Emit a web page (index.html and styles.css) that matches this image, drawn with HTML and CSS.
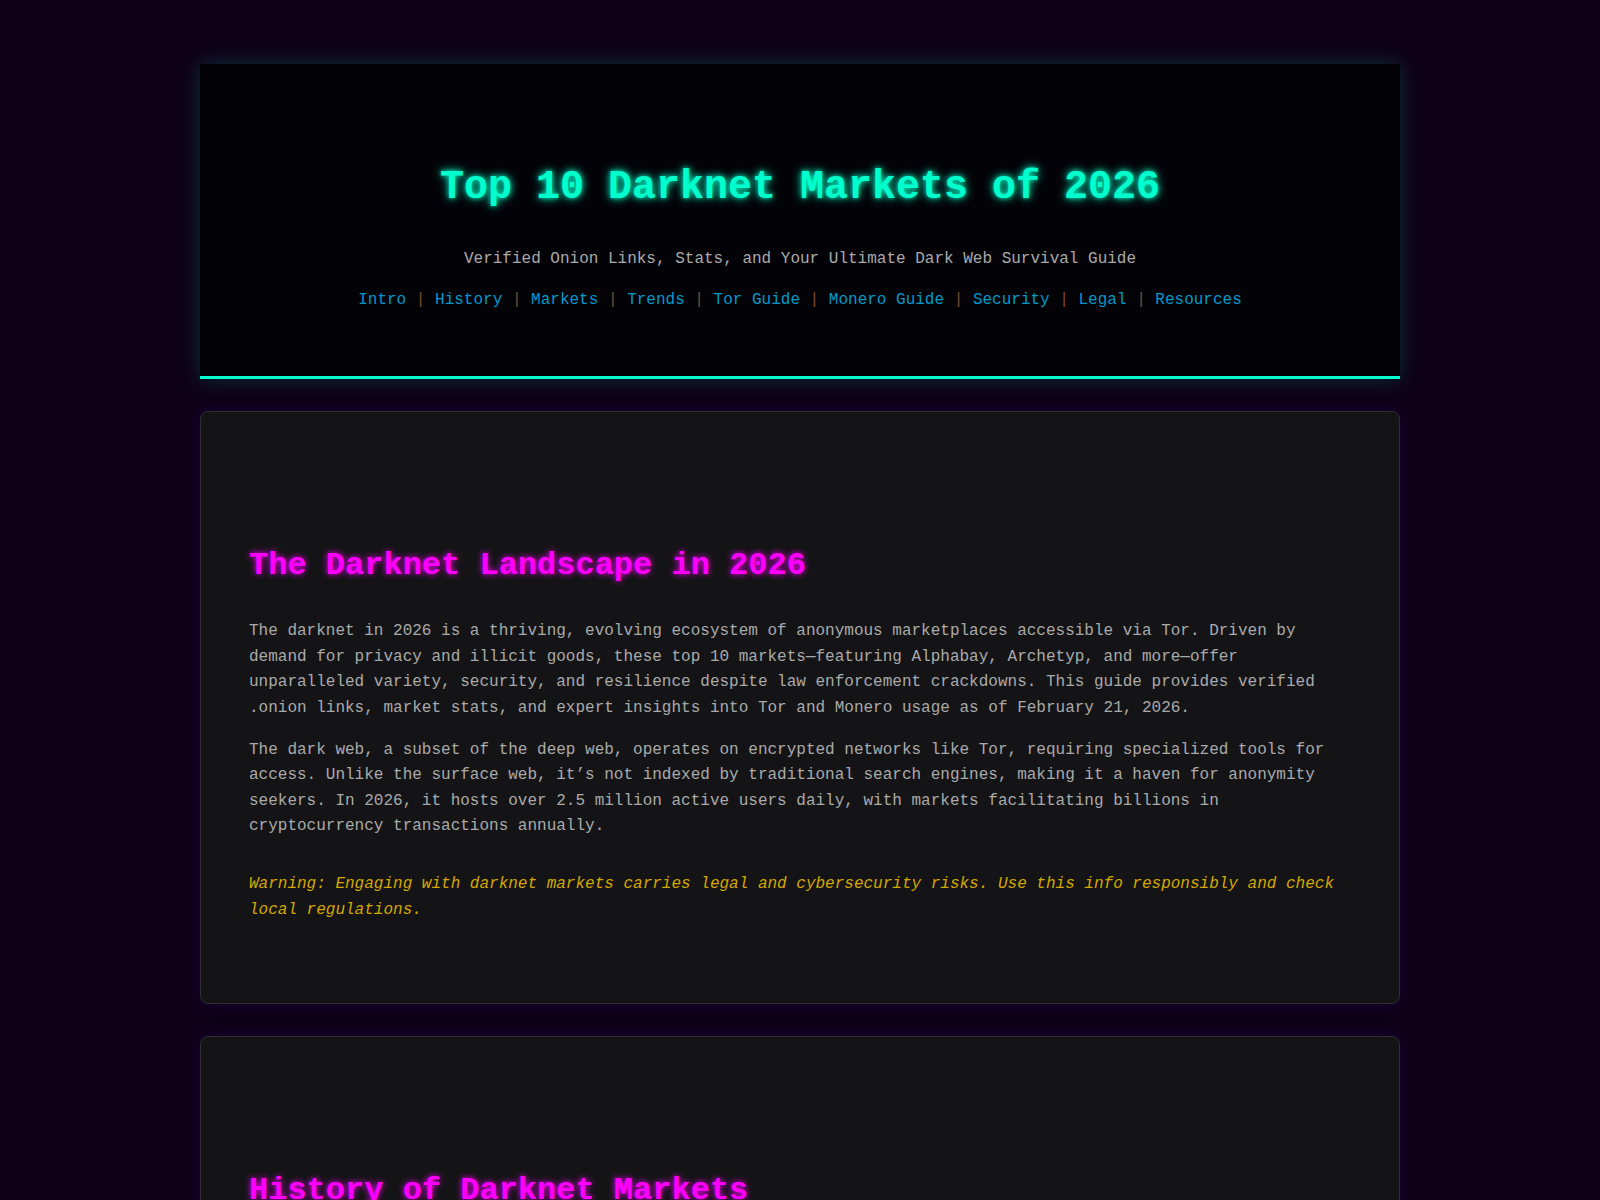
FILE: index.html
```html
<!DOCTYPE html>
<html lang="en">
<head>
    <meta charset="UTF-8">
    <meta name="viewport" content="width=device-width, initial-scale=1.0">
    <title>Top 10 Darknet Markets of 2026</title>
    <link rel="stylesheet" href="styles.css">
</head>
<body>
    <div class="container">
        <header class="site-header">
            <h1>Top 10 Darknet Markets of 2026</h1>
            <p class="tagline">Verified Onion Links, Stats, and Your Ultimate Dark Web Survival Guide</p>
            <nav class="nav">
                <a href="#intro">Intro</a> <span class="sep">|</span>
                <a href="#history">History</a> <span class="sep">|</span>
                <a href="#markets">Markets</a> <span class="sep">|</span>
                <a href="#trends">Trends</a> <span class="sep">|</span>
                <a href="#tor">Tor Guide</a> <span class="sep">|</span>
                <a href="#monero">Monero Guide</a> <span class="sep">|</span>
                <a href="#security">Security</a> <span class="sep">|</span>
                <a href="#legal">Legal</a> <span class="sep">|</span>
                <a href="#resources">Resources</a>
            </nav>
        </header>

        <section class="section" id="intro">
            <h2>The Darknet Landscape in 2026</h2>
            <p>The darknet in 2026 is a thriving, evolving ecosystem of anonymous marketplaces accessible via Tor. Driven by demand for privacy and illicit goods, these top 10 markets—featuring Alphabay, Archetyp, and more—offer unparalleled variety, security, and resilience despite law enforcement crackdowns. This guide provides verified .onion links, market stats, and expert insights into Tor and Monero usage as of February 21, 2026.</p>
            <p>The dark web, a subset of the deep web, operates on encrypted networks like Tor, requiring specialized tools for access. Unlike the surface web, it’s not indexed by traditional search engines, making it a haven for anonymity seekers. In 2026, it hosts over 2.5 million active users daily, with markets facilitating billions in cryptocurrency transactions annually.</p>
            <p class="warning">Warning: Engaging with darknet markets carries legal and cybersecurity risks. Use this info responsibly and check local regulations.</p>
        </section>

        <section class="section" id="history">
            <h2>History of Darknet Markets</h2>
            <p>Darknet markets trace their roots back to the early days of Tor hidden services, when the first anonymous storefronts appeared and changed online trade.</p>
        </section>
    </div>
</body>
</html>
```

FILE: styles.css
```css
body {
    font-family: "Liberation Mono", "Courier New", monospace;
    margin: 0;
    padding: 0;
    background-color: #0e0019;
    color: #aaaaaa;
    font-size: 16px;
    line-height: 1.6;
}
.container {
    max-width: 1200px;
    margin: 0 auto;
    padding-top: 64px;
}
.site-header {
    background: #030307;
    border-bottom: 3px solid #00ffcc;
    box-shadow: 0 0 20px rgba(0, 255, 204, 0.18);
    text-align: center;
    padding: 100px 20px 47px;
}
.site-header h1 {
    margin: 0;
    font-size: 40px;
    line-height: 48px;
    color: #00ffcc;
    text-shadow: 0 0 10px #00ffcc, 0 0 4px rgba(0, 255, 204, 0.6);
}
.tagline {
    margin: 35px 0 15px;
    color: #aaaaaa;
}
.nav {
    margin-bottom: 16px;
}
.nav a {
    color: #0099cc;
    text-decoration: none;
}
.sep {
    color: #7a4a33;
}
.section {
    background: #141416;
    border: 1px solid #2e2e33;
    border-radius: 8px;
    box-shadow: 0 0 15px rgba(60, 0, 110, 0.35);
    margin-top: 32px;
    padding: 48px;
}
.section h2 {
    margin: 87px 0 34px;
    font-size: 32px;
    line-height: 38px;
    color: #ff00ff;
    text-shadow: 0 0 6px #ff00ff;
}
.section p {
    margin: 16px 0;
}
.section p.warning {
    color: #d4a800;
    font-style: italic;
    padding: 16px 0;
}
```
